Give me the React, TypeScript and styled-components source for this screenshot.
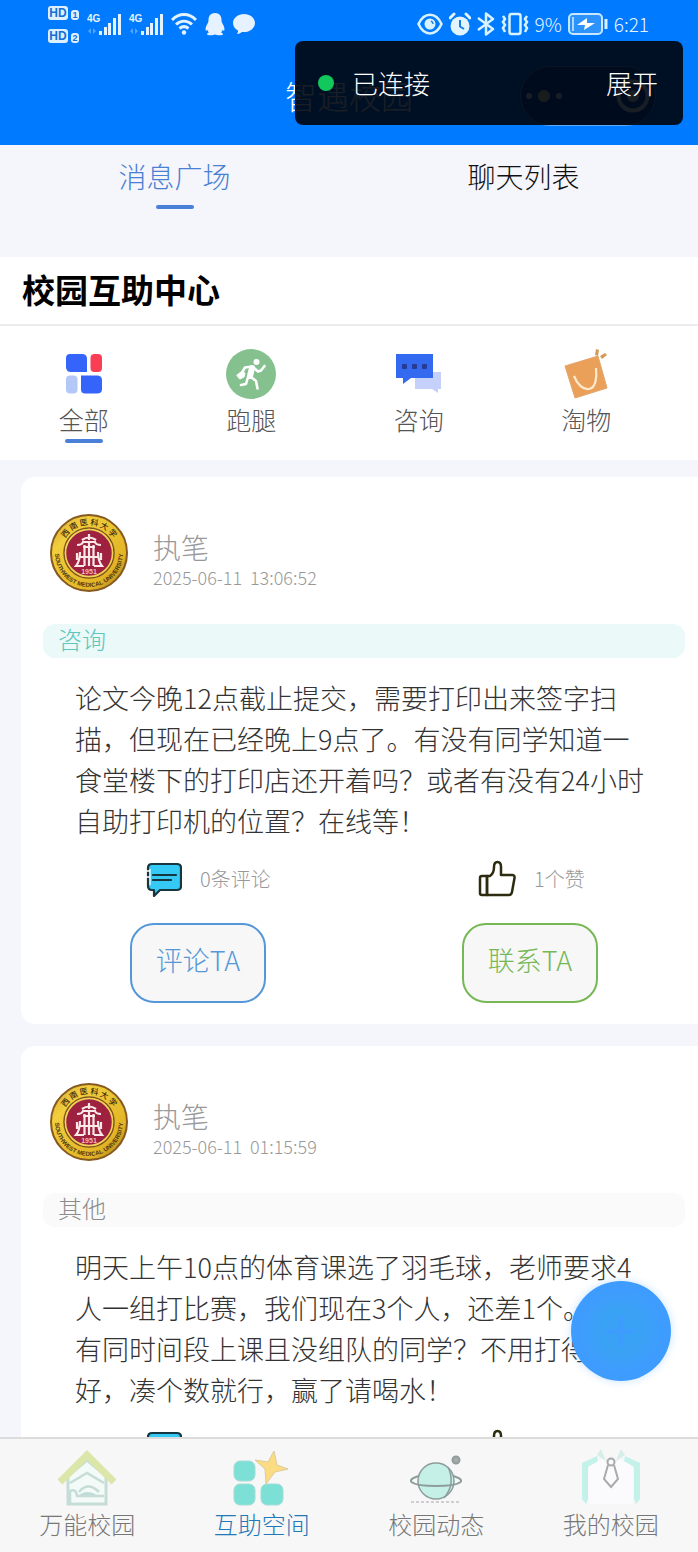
import React from 'react';
import styled, { createGlobalStyle } from 'styled-components';

const GlobalStyle = createGlobalStyle`
  *, *::before, *::after { box-sizing: border-box; }
  body {
    margin: 0;
    background: #f5f6fb;
    font-family: "Noto Sans CJK SC", "Noto Sans", sans-serif;
    font-weight: 300;
    color: #222;
  }
  h1, h2, p { margin: 0; font-weight: inherit; }
  button { font-family: inherit; font-weight: inherit; padding: 0; border: 0; background: none; cursor: pointer; }
  svg { display: block; flex: none; }
`;

const Screen = styled.div`
  position: relative;
  display: flex;
  flex-direction: column;
  height: 100vh;
  overflow: hidden;
`;

const Header = styled.header`
  position: relative;
  flex: none;
  background: #007aff;
  color: #e6f4ff;
`;

const StatusBar = styled.div`
  display: flex;
  justify-content: space-between;
  align-items: center;
  height: 48px;
  padding: 0 49px 0 48px;
`;

const StatusGroup = styled.div<{ $gap: number }>`
  display: flex;
  align-items: center;
  gap: ${(p) => p.$gap}px;
  font-size: 19px;
  line-height: 24px;
`;

const HdStack = styled.div`
  display: flex;
  flex-direction: column;
  gap: 9px;
`;

const HdRow = styled.div`
  display: flex;
  align-items: flex-end;
  gap: 3px;
`;

const HdBadge = styled.span<{ $small?: boolean }>`
  width: ${(p) => (p.$small ? 8 : 20)}px;
  height: ${(p) => (p.$small ? 10 : 14)}px;
  border-radius: 3px;
  background: #dcf0ff;
  color: #1470d8;
  font: bold ${(p) => (p.$small ? 9 : 12)}px/${(p) => (p.$small ? 10 : 14)}px "Liberation Sans", sans-serif;
  text-align: center;
`;

const TitleBar = styled.div`
  display: flex;
  justify-content: center;
  height: 97px;
  padding-top: 27px;
`;

const AppTitle = styled.h1`
  font-size: 32px;
  line-height: 40px;
  color: #fff;
`;

const Capsule = styled.div`
  position: absolute;
  right: 42px;
  bottom: 19px;
  display: flex;
  align-items: center;
  justify-content: space-between;
  width: 136px;
  height: 60px;
  padding: 0 5px;
  border: 1px solid #5ea9f5;
  border-radius: 30px;
  background: #0058b8;
`;

const Toast = styled.div`
  position: absolute;
  top: 41px;
  right: 15px;
  display: flex;
  align-items: center;
  width: 388px;
  height: 84px;
  padding: 0 25px 0 23px;
  border-radius: 8px;
  background: rgba(0, 4, 12, 0.9);
  color: #fff;
  font-size: 26px;
  line-height: 36px;
`;

const Dot = styled.span`
  width: 16px;
  height: 16px;
  margin-right: 18px;
  border-radius: 50%;
  background: #12c75c;
`;

const ToastAction = styled.button`
  margin-left: auto;
  color: #fff;
  font-size: 26px;
  line-height: 36px;
`;

const Tabs = styled.nav`
  flex: none;
  display: grid;
  grid-template-columns: 1fr 1fr;
  height: 112px;
  align-items: start;
  padding-top: 11px;
`;

const Tab = styled.button<{ $active?: boolean }>`
  display: flex;
  flex-direction: column;
  align-items: center;
  gap: 9px;
  font-size: 28px;
  line-height: 40px;
  color: ${(p) => (p.$active ? '#4a80d4' : '#111')};
`;

const Underline = styled.span`
  width: 38px;
  height: 4px;
  border-radius: 2px;
  background: #4a80d8;
`;

const PageTitle = styled.h2`
  flex: none;
  padding: 7px 22px 10px;
  border-bottom: 2px solid #ebebed;
  background: #fff;
  color: #000;
  font-size: 33px;
  font-weight: 700;
  line-height: 50px;
`;

const Categories = styled.nav`
  flex: none;
  display: grid;
  grid-template-columns: repeat(4, 1fr);
  height: 134px;
  padding: 21px 28px 0 0;
  background: #fff;
`;

const Category = styled.button`
  display: flex;
  flex-direction: column;
  align-items: center;
  justify-content: flex-start;
  color: #555;
  font-size: 25px;
  line-height: 36px;
`;

const CategoryIcon = styled.span`
  display: flex;
  align-items: center;
  height: 54px;
`;

const CategoryLine = styled(Underline)`
  margin-top: 2px;
`;

const Feed = styled.main`
  flex: 1;
  min-height: 0;
  overflow-y: auto;
  scrollbar-width: none;
  display: flex;
  flex-direction: column;
  gap: 22px;
  padding: 17px 0 0 21px;
`;

const Card = styled.article`
  flex: none;
  padding: 37px 0 21px;
  border-radius: 14px 0 0 14px;
  background: #fff;
`;

const Author = styled.header`
  display: flex;
  gap: 25px;
  padding-left: 29px;
  color: #999;
`;

const AuthorText = styled.div`
  padding-top: 15px;
`;

const Name = styled.div`
  font-size: 28px;
  line-height: 36px;
`;

const Time = styled.time`
  display: block;
  font-size: 18px;
  line-height: 24px;
  white-space: pre;
`;

const Tag = styled.div<{ $tone: 'teal' | 'grey' }>`
  height: 34px;
  margin: 32px 13px 0 22px;
  padding-left: 15px;
  border-radius: 12px;
  background: ${(p) => (p.$tone === 'teal' ? '#ebf9f8' : '#fafafb')};
  color: ${(p) => (p.$tone === 'teal' ? '#5cc6bd' : '#8c8c8c')};
  font-size: 24px;
  line-height: 30px;
`;

const Body = styled.p`
  margin: 19px 0 2px;
  padding-left: 54px;
  color: #333;
  font-size: 27px;
  line-height: 41px;
  white-space: pre;
`;

const Columns = styled.div`
  display: grid;
  grid-template-columns: 1fr 1fr;
  padding: 0 2px 0 11px;
`;

const Stat = styled.div`
  display: flex;
  align-items: center;
  gap: 18px;
  height: 38px;
  margin: 17px 0 25px;
  padding-left: 114px;
  color: #999;
  font-size: 20px;
  line-height: 30px;
`;

const Action = styled.button<{ $color: string }>`
  justify-self: center;
  width: 136px;
  height: 80px;
  padding-bottom: 6px;
  border: 2px solid ${(p) => p.$color};
  border-radius: 24px;
  background: #f7f7f7;
  color: ${(p) => p.$color};
  font-size: 27px;
  line-height: 36px;
`;

const Fab = styled.button`
  position: absolute;
  right: 27px;
  bottom: 171px;
  display: grid;
  place-items: center;
  width: 100px;
  height: 100px;
  border-radius: 50%;
  background: radial-gradient(circle, #3aa2f4 0 30%, #3f9cff 60%);
  box-shadow: 0 0 8px rgba(64, 158, 255, 0.3);
`;

const BottomNav = styled.nav`
  flex: none;
  display: grid;
  grid-template-columns: repeat(4, 1fr);
  height: 115px;
  padding-top: 9px;
  border-top: 2px solid #dcdcdc;
  background: #f7f7f7;
`;

const NavItem = styled.button<{ $active?: boolean }>`
  display: flex;
  flex-direction: column;
  align-items: center;
  justify-content: flex-start;
  color: ${(p) => (p.$active ? '#2379b8' : '#777')};
  font-size: 24px;
  line-height: 32px;
`;

const Signal = () => (
  <svg width="34" height="24" viewBox="0 0 34 24" fill="#e2f3ff">
    <text x="0" y="10" fontSize="10" fontWeight="700" fontFamily="Liberation Sans">4G</text>
    <rect x="12" y="19" width="3" height="4" />
    <rect x="17" y="15" width="3" height="8" />
    <rect x="21" y="11" width="3" height="12" />
    <rect x="26" y="6" width="3" height="17" />
    <rect x="31" y="2" width="3" height="21" />
    <path d="M1 19l3-3v6zM9 19l-3-3v6z" opacity=".35" />
  </svg>
);

const Wifi = () => (
  <svg width="26" height="24" viewBox="0 0 26 24" fill="none" stroke="#e2f3ff" strokeWidth="3">
    <path d="M1 8C8 .8 18 .8 25 8M5 12.500c5-4.500 11-4.500 16 0M8.500 16.500c3-2.500 6-2.500 9 0" />
    <circle cx="13" cy="20.500" r="2.200" fill="#e2f3ff" stroke="none" />
  </svg>
);

const Penguin = () => (
  <svg width="20" height="24" viewBox="0 0 20 24" fill="#e6f2ff">
    <path d="M10 1C5.500 1 3.500 4 3.500 8c0 1.500-.3 2.200-1 3.600C1.300 14 .3 16 .6 18c.2 1.200 1 .8 1.900-.2.2 1 .6 1.900 1.300 2.700-1.100.5-1.800 1-1.800 1.700 0 1.200 6 1.300 8 .3 2 1 8 .9 8-.3 0-.7-.7-1.200-1.800-1.700.7-.8 1.100-1.700 1.300-2.700.9 1 1.700 1.400 1.900.2.300-2-.7-4-1.900-6.400-.7-1.400-1-2.100-1-3.600 0-4-2-7-6.500-7z" />
  </svg>
);

const Bubble = () => (
  <svg width="22" height="22" viewBox="0 0 22 22" fill="#e6f2ff">
    <path d="M11 1C5 1 0 5 0 10c0 3.200 2 6 5 7.500.2 1.300-.3 2.500-1.200 3.500 2 0 3.800-.8 5.200-2 .7.100 1.300.1 2 .1 6 0 11-4 11-9.100S17 1 11 1z" />
  </svg>
);

const Eye = () => (
  <svg width="26" height="22" viewBox="0 0 26 22" fill="none" stroke="#d8f2ff" strokeWidth="2.500">
    <path d="M1.500 11C7-1.500 19-1.500 24.500 11 19 23.500 7 23.500 1.500 11z" />
    <circle cx="13" cy="11" r="5.500" fill="#d8f2ff" stroke="none" />
    <path d="M14 8q2 1 2 3" stroke="#2586e8" strokeWidth="1.500" />
  </svg>
);

const Alarm = () => (
  <svg width="22" height="24" viewBox="0 0 22 24">
    <circle cx="11" cy="14" r="9.500" fill="#e2f5ff" />
    <path d="M1 6l4-4M21 6l-4-4" stroke="#e2f5ff" strokeWidth="3" strokeLinecap="round" />
    <path d="M11 8v6.500l4 2.500" fill="none" stroke="#157de8" strokeWidth="2" />
  </svg>
);

const Bluetooth = () => (
  <svg width="18" height="24" viewBox="0 0 18 24" fill="none" stroke="#d8f2ff" strokeWidth="2.500" strokeLinejoin="round">
    <path d="M1 6l15 11-7 5.500v-21L16 7 1 18" />
  </svg>
);

const Vibrate = () => (
  <svg width="28" height="24" viewBox="0 0 28 24" fill="none" stroke="#d8f2ff" strokeWidth="2.500">
    <rect x="8.500" y="2" width="11" height="20" rx="2" />
    <path d="M2 4l2 3-2 3 2 3-2 3 2 4M26 4l-2 3 2 3-2 3 2 3-2 4" strokeWidth="2.500" />
  </svg>
);

const Battery = () => (
  <svg width="40" height="22" viewBox="0 0 40 22">
    <rect x="1" y="1" width="33" height="20" rx="4" fill="#2c93fc" stroke="#c6e7ff" strokeWidth="2" />
    <path d="M5 4v14" stroke="#a8d8ff" strokeWidth="2" />
    <path d="M19 5L9 12h8l-1 5 11-7h-8z" fill="#fff" />
    <path d="M38 6v10" stroke="#d8f2ff" strokeWidth="3" />
  </svg>
);

const CapsuleDots = () => (
  <svg width="36" height="14" viewBox="0 0 36 14" fill="#fff">
    <circle cx="3" cy="7" r="3" />
    <circle cx="18" cy="7" r="6" fill="#fff3b0" />
    <circle cx="33" cy="7" r="3" />
  </svg>
);

const CapsuleRing = () => (
  <svg width="34" height="34" viewBox="0 0 34 34">
    <circle cx="17" cy="17" r="14.500" fill="none" stroke="#fff" strokeWidth="4" />
    <circle cx="17" cy="17" r="6" fill="#fff" />
  </svg>
);

const AllIcon = () => (
  <svg width="36" height="40" viewBox="0 0 36 40">
    <path d="M4 0h12q5 0 5 5v13H5q-5 0-5-5V4q0-4 4-4z" fill="#3564fa" />
    <rect x="24.500" y="0" width="11.500" height="18" rx="4" fill="#fa3e56" />
    <rect x="0" y="21.500" width="11.500" height="18" rx="4" fill="#b3c8f7" />
    <path d="M15 21.500h16q5 0 5 5V35q0 4.500-5 4.500H19q-4 0-4-4z" fill="#3564fa" />
  </svg>
);

const RunIcon = () => (
  <svg width="50" height="50" viewBox="0 0 50 50" fill="none" stroke="#fff" strokeLinecap="round" strokeLinejoin="round">
    <circle cx="25" cy="25" r="25" fill="#85c08f" stroke="none" />
    <circle cx="30.500" cy="13" r="3" fill="#fff" stroke="none" />
    <path d="M26 19l-2 8" strokeWidth="6" />
    <path d="M26 17.500l-7 1-3 5M27 18l5 4.500 3-1 3.500-4.500M25 28l5 4 1.500 7.500M22 28l-2 7-5 1" strokeWidth="2.600" />
    <path d="M11 26l4-3 4 1-1 4-4 2z" fill="#fff" strokeWidth="1" />
  </svg>
);

const AskIcon = () => (
  <svg width="46" height="42" viewBox="0 0 46 42">
    <path d="M19 19h26v17h-3v4l-6-4H19z" fill="#c5d1fa" />
    <path d="M0 1h37v24H15l-8 6v-6H0z" fill="#346af0" />
    <g fill="#263b91">
      <rect x="6" y="11" width="5" height="5" rx="1" />
      <rect x="16" y="11" width="5" height="5" rx="1" />
      <rect x="26" y="11" width="5" height="5" rx="1" />
    </g>
  </svg>
);

const BagIcon = () => (
  <svg width="44" height="52" viewBox="0 0 44 52">
    <path d="M1 18l33-10 9 32-32 10z" fill="#eba05a" stroke="#e2a66d" />
    <path d="M10 28c3 8 9 14 15 13 7-1 8-12 7-21" fill="none" stroke="#fdebd0" strokeWidth="2.200" />
    <path d="M31 7l1-6 3 1-1 6zM36 8l5-3 2 2-5 4z" fill="#d59a58" />
  </svg>
);

const Seal = ({ id }: { id: string }) => (
  <svg width="78" height="78" viewBox="0 0 78 78" role="img" aria-label="西南医科大学">
    <defs>
      <linearGradient id={`${id}-gold`} x1="0" y1="0" x2="1" y2="1">
        <stop offset="0" stopColor="#cda63a" />
        <stop offset=".25" stopColor="#f2cd3c" />
        <stop offset=".75" stopColor="#e2b426" />
        <stop offset="1" stopColor="#9a6d16" />
      </linearGradient>
      <path id={`${id}-top`} d="M11 39a28 28 0 0 1 56 0" />
      <path id={`${id}-low`} d="M5 39a34 34 0 0 0 68 0" />
    </defs>
    <circle cx="39" cy="39" r="38" fill={`url(#${id}-gold)`} stroke="#85591f" strokeWidth="2" />
    <circle cx="39" cy="39" r="25" fill="none" stroke="#80551b" strokeWidth="1.500" />
    <circle cx="39" cy="39" r="23.500" fill="#9e2140" stroke="#efd35c" strokeWidth="1.500" />
    <text fontSize="8" fontWeight="500" fill="#3b2b10" textAnchor="middle">
      <textPath href={`#${id}-top`} startOffset="50%">西 南 医 科 大 学</textPath>
    </text>
    <text fontSize="6" fontWeight="700" fontFamily="Liberation Sans" fill="#4a3611" textAnchor="middle">
      <textPath href={`#${id}-low`} startOffset="50%">SOUTHWEST MEDICAL UNIVERSITY</textPath>
    </text>
    <g fill="none" stroke="#fbe9ea" strokeWidth="2.200">
      <path d="M39 20v6M32 26q7-5 14 0M27 31q5 0 6-3h12q1 3 6 3M33 33h12M39 28v24M34.500 31v21M43.500 31v21M30 38q0 9-4 14h8M48 38q0 9 4 14h-8M27 39v7M51 39v7M30 43h18" />
    </g>
    <text x="39" y="60" fontSize="7" fontWeight="700" fill="#f1bcbc" textAnchor="middle" fontFamily="Liberation Sans">1951</text>
  </svg>
);

const CommentIcon = () => (
  <svg width="36" height="36" viewBox="0 0 36 36">
    <path d="M6 3h25q4 0 4 4v18q0 4-4 4H14l-6 6v-6H6q-4 0-4-4V7q0-4 4-4z" fill="#35c9f5" stroke="#163640" strokeWidth="2.200" strokeLinejoin="round" />
    <path d="M7 14h23M7 19h18" stroke="#163640" strokeWidth="2.200" strokeLinecap="round" />
    <path d="M4 8v16" stroke="#d8f6ff" strokeWidth="1.500" />
    <path d="M0 10h4M0 16h4" stroke="#fff" strokeWidth="1.500" />
  </svg>
);

const LikeIcon = () => (
  <svg width="38" height="38" viewBox="0 0 38 38" fill="none" stroke="#2d2c10" strokeWidth="2.500" strokeLinejoin="round" strokeLinecap="round">
    <path d="M9 16h3c3-2 4-5 4-9 0-3 1-5 3.500-5S23 4 23 7v8h11q3 0 2.500 3L34 32q-.6 3-3 3H9z" />
    <path d="M9 16H4q-2 0-2 2v15q0 2 2 2h5z" />
  </svg>
);

const HomeIcon = () => (
  <svg width="60" height="60" viewBox="0 0 60 60" fill="none">
    <path d="M11 28v28h38V28L30 12z" fill="#f3faf7" stroke="#c6ddd7" strokeWidth="3" />
    <path d="M3 34L30 7l27 27" stroke="#dbe6a8" strokeWidth="7" />
    <path d="M13 35l17-10 17 10M13 55V43q6-3 7 5h27M22 44q9-11 20 0" stroke="#c6ddd7" strokeWidth="2.500" />
    <path d="M22 47q8-6 18 0z" fill="#c0dcd6" />
  </svg>
);

const SpaceIcon = () => (
  <svg width="60" height="60" viewBox="0 0 60 60">
    <g fill="#7ce0d6" stroke="#a5dcd6">
      <rect x="2" y="13" width="21" height="20" rx="6" />
      <rect x="2" y="36" width="21" height="21" rx="6" />
      <rect x="29" y="36" width="22" height="21" rx="6" />
    </g>
    <path d="M42 3l3 14 11 4-13 3-9 12-1-15-10-9 13 2z" fill="#fcdc82" stroke="#dccb9c" />
  </svg>
);

const PlanetIcon = () => (
  <svg width="60" height="60" viewBox="0 0 60 60" fill="none" stroke="#8e9c9c">
    <circle cx="30" cy="33" r="18" fill="#c5f0e8" strokeWidth="1.500" />
    <path d="M42 19q8 17-4 31" strokeWidth="1.500" />
    <path d="M13 28c-15 4-9 10 17 10s32-6 17-10" strokeWidth="2" />
    <circle cx="50" cy="12" r="3.500" fill="#aaa" strokeWidth="2" />
    <path d="M5 54h49" stroke="#cfcfd2" strokeWidth="2" strokeDasharray="3 2" />
  </svg>
);

const SuitIcon = () => (
  <svg width="60" height="60" viewBox="0 0 60 60" fill="none">
    <path d="M8 56V18l13-7 9 7 9-7 13 7v38z" fill="#fbfbfd" />
    <path d="M16 8L1 15v36l4 5 2-5V19l10-6zM44 8l15 7v36l-4 5-2-5V19l-10-6z" fill="#c4f1ea" />
    <path d="M20 1l-4 6 9 6zM40 1l4 6-9 6z" fill="#d5eee9" />
    <path d="M27 17l-4 14 7 8 7-8-4-14" stroke="#aaa" strokeWidth="2" />
    <circle cx="30" cy="14" r="3.500" stroke="#aaa" strokeWidth="2" fill="#fafafa" />
  </svg>
);

interface Post {
  id: string;
  author: string;
  time: string;
  tag: string;
  tone: 'teal' | 'grey';
  text: string;
  comments: number;
  likes: number;
}

const posts: Post[] = [
  {
    id: 'p1',
    author: '执笔',
    time: '2025-06-11  13:06:52',
    tag: '咨询',
    tone: 'teal',
    text: '论文今晚12点截止提交，需要打印出来签字扫\n描，但现在已经晚上9点了。有没有同学知道一\n食堂楼下的打印店还开着吗？或者有没有24小时\n自助打印机的位置？在线等！',
    comments: 0,
    likes: 1,
  },
  {
    id: 'p2',
    author: '执笔',
    time: '2025-06-11  01:15:59',
    tag: '其他',
    tone: 'grey',
    text: '明天上午10点的体育课选了羽毛球，老师要求4\n人一组打比赛，我们现在3个人，还差1个。有没\n有同时间段上课且没组队的同学？不用打得很\n好，凑个数就行，赢了请喝水！',
    comments: 0,
    likes: 0,
  },
];

const categories = [
  { label: '全部', icon: <AllIcon />, active: true },
  { label: '跑腿', icon: <RunIcon /> },
  { label: '咨询', icon: <AskIcon /> },
  { label: '淘物', icon: <BagIcon /> },
];

const navItems = [
  { label: '万能校园', icon: <HomeIcon /> },
  { label: '互助空间', icon: <SpaceIcon />, active: true },
  { label: '校园动态', icon: <PlanetIcon /> },
  { label: '我的校园', icon: <SuitIcon /> },
];

const PostCard = ({ post }: { post: Post }) => (
  <Card>
    <Author>
      <Seal id={post.id} />
      <AuthorText>
        <Name>{post.author}</Name>
        <Time>{post.time}</Time>
      </AuthorText>
    </Author>
    <Tag $tone={post.tone}>{post.tag}</Tag>
    <Body>{post.text}</Body>
    <Columns>
      <Stat><CommentIcon />{post.comments}条评论</Stat>
      <Stat><LikeIcon />{post.likes}个赞</Stat>
      <Action $color="#5597d8">评论TA</Action>
      <Action $color="#76b856">联系TA</Action>
    </Columns>
  </Card>
);

export default function App() {
  return (
    <>
      <GlobalStyle />
      <Screen>
        <Header>
          <StatusBar>
            <StatusGroup $gap={8}>
              <HdStack>
                <HdRow><HdBadge>HD</HdBadge><HdBadge $small>1</HdBadge></HdRow>
                <HdRow><HdBadge>HD</HdBadge><HdBadge $small>2</HdBadge></HdRow>
              </HdStack>
              <Signal />
              <Signal />
              <Wifi />
              <Penguin />
              <Bubble />
            </StatusGroup>
            <StatusGroup $gap={6}>
              <Eye />
              <Alarm />
              <Bluetooth />
              <Vibrate />
              <span>9%</span>
              <Battery />
              <span>6:21</span>
            </StatusGroup>
          </StatusBar>
          <TitleBar><AppTitle>智遇校园</AppTitle></TitleBar>
          <Capsule><CapsuleDots /><CapsuleRing /></Capsule>
          <Toast role="status">
            <Dot />
            已连接
            <ToastAction>展开</ToastAction>
          </Toast>
        </Header>
        <Tabs>
          <Tab $active>消息广场<Underline /></Tab>
          <Tab>聊天列表</Tab>
        </Tabs>
        <PageTitle>校园互助中心</PageTitle>
        <Categories>
          {categories.map((c) => (
            <Category key={c.label}>
              <CategoryIcon>{c.icon}</CategoryIcon>
              {c.label}
              {c.active && <CategoryLine />}
            </Category>
          ))}
        </Categories>
        <Feed>
          {posts.map((p) => <PostCard key={p.id} post={p} />)}
        </Feed>
        <BottomNav>
          {navItems.map((n) => (
            <NavItem key={n.label} $active={n.active}>{n.icon}{n.label}</NavItem>
          ))}
        </BottomNav>
        <Fab aria-label="发布">
          <svg width="36" height="36" viewBox="0 0 36 36" stroke="#3f9cff" strokeWidth="4">
            <path d="M18 3v30M3 18h30" />
          </svg>
        </Fab>
      </Screen>
    </>
  );
}
